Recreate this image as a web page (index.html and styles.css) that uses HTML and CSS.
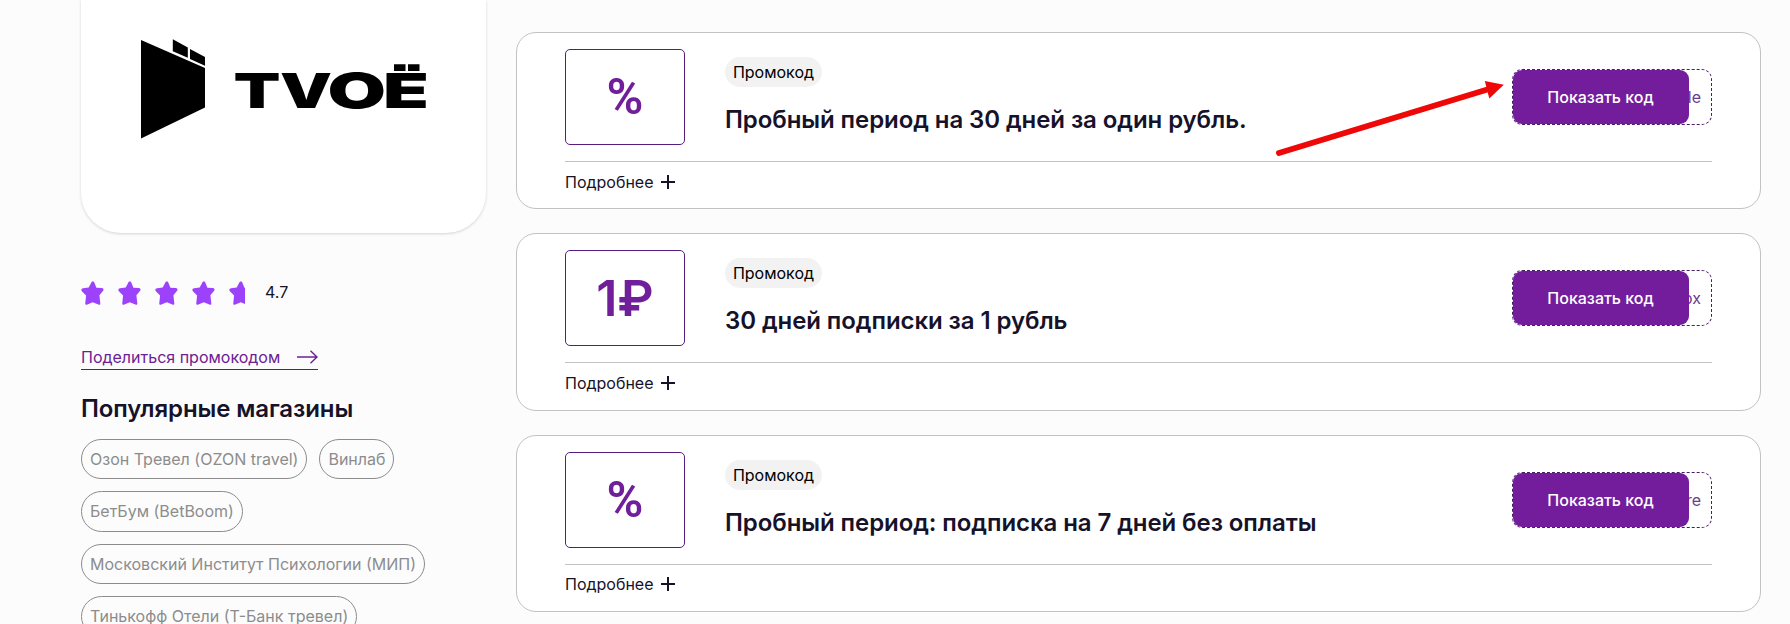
FILE: index.html
```
<!DOCTYPE html>
<html lang="ru">
<head>
<meta charset="utf-8">
<title>TVOЁ — промокоды</title>
<link rel="stylesheet" href="styles.css">
</head>
<body>
<svg class="sprite" width="0" height="0">
  <symbol id="star" viewBox="0 0 23 24"><path d="M11.800.5c.8 0 1.300.5 1.700 1.400l1.900 4.900 5.400.3c1.900.3 2.200 1.900.9 3.200l-3.300 3.900.9 8c.2 1.500-.7 2-1.900 1.300l-5.600-2.200-5.400 2.200c-1.300.6-2.300 0-2.100-1.400l.8-7.500-4-4.100c-1.300-1.400-.8-2.900 1-3.200l5.600-.7 2.400-4.700c.4-.9.9-1.400 1.700-1.400z" fill="#9b42fa"/></symbol>
  <symbol id="plus" viewBox="0 0 14 14"><path d="M7 0v14M0 7h14" stroke="#161229" stroke-width="2" fill="none"/></symbol>
</svg>
<div class="page">
  <aside class="side">
    <div class="brand">
      <svg class="brand-logo" width="290" height="104" viewBox="139 36 290 104">
        <clipPath id="letter-body"><rect x="0" y="72.800" width="60" height="40"/></clipPath>
        <path d="M141 40l64 28v39.500l-64 31zM172.800 39.300l15 8.200v10.200l-15-6.500zM190 49l15 8v8.700l-15-6.800z"/>
        <text class="brand-text" y="108" transform="translate(233.500 0)" textLength="47" lengthAdjust="spacingAndGlyphs">T</text>
        <text class="brand-text" y="108" transform="translate(280 0)" textLength="52" lengthAdjust="spacingAndGlyphs">V</text>
        <text class="brand-text" y="108" transform="translate(327.500 0)" textLength="58.500" lengthAdjust="spacingAndGlyphs">O</text>
        <g transform="translate(383 0)" clip-path="url(#letter-body)"><text class="brand-text" y="108" textLength="46" lengthAdjust="spacingAndGlyphs">Ё</text></g>
        <path d="M394 64.300h11.500v6.700h-11.500zM408 64.300h11.500v6.700h-11.500z"/>
      </svg>
    </div>
    <div class="rating">
      <svg class="star"><use href="#star"/></svg>
      <svg class="star"><use href="#star"/></svg>
      <svg class="star"><use href="#star"/></svg>
      <svg class="star"><use href="#star"/></svg>
      <span class="star-part"><svg class="star"><use href="#star"/></svg></span>
      <span class="score">4.7</span>
    </div>
    <a class="share"><span>Поделиться промокодом</span><svg width="21" height="14" viewBox="0 0 21 14"><path d="M0 7h20M13.500.8L20 7l-6.500 6.200" fill="none" stroke="#6b2193" stroke-width="1.400"/></svg></a>
    <h2 class="shops-title">Популярные магазины</h2>
    <div class="shops">
      <a class="shop">Озон Тревел (OZON travel)</a>
      <a class="shop">Винлаб</a>
      <a class="shop">БетБум (BetBoom)</a>
      <a class="shop">Московский Институт Психологии (МИП)</a>
      <a class="shop">Тинькофф Отели (Т-Банк тревел)</a>
    </div>
  </aside>
  <main class="offers">
    <article class="card">
      <div class="card-top">
        <div class="value value-percent">%</div>
        <div class="info"><span class="badge">Промокод</span><h3 class="title">Пробный период на 30 дней за один рубль.</h3></div>
        <div class="code"><span class="code-tail">le</span><span class="show">Показать код</span></div>
      </div>
      <div class="more">Подробнее<svg width="14" height="14"><use href="#plus"/></svg></div>
    </article>
    <article class="card">
      <div class="card-top">
        <div class="value">1₽</div>
        <div class="info"><span class="badge">Промокод</span><h3 class="title">30 дней подписки за 1 рубль</h3></div>
        <div class="code"><span class="code-tail">ox</span><span class="show">Показать код</span></div>
      </div>
      <div class="more">Подробнее<svg width="14" height="14"><use href="#plus"/></svg></div>
    </article>
    <article class="card">
      <div class="card-top">
        <div class="value value-percent">%</div>
        <div class="info"><span class="badge">Промокод</span><h3 class="title">Пробный период: подписка на 7 дней без оплаты</h3></div>
        <div class="code"><span class="code-tail">re</span><span class="show">Показать код</span></div>
      </div>
      <div class="more">Подробнее<svg width="14" height="14"><use href="#plus"/></svg></div>
    </article>
  </main>
</div>
<svg class="pointer" width="232" height="80" viewBox="1274 78 232 80"><path d="M1279 153L1489 89" stroke="#ef0808" stroke-width="6" stroke-linecap="round"/><path d="M1484.800 81l19 3.700-14.500 13.800z" fill="#ef0808"/></svg>
</body>
</html>
```
FILE: styles.css
```
* { box-sizing: border-box; }
body {
  margin: 0;
  height: 624px;
  overflow: hidden;
  background: #fcfcfc;
  color: #161229;
  font: 400 16px/20px Inter, "Liberation Sans", sans-serif;
}
.sprite { display: block; height: 0; }
.page { display: flex; align-items: flex-start; height: 624px; padding-left: 81px; overflow: hidden; }
.side { width: 405px; flex: none; }
.brand {
  height: 233px;
  padding: 36px 0 0 58px;
  background: #fff;
  border-radius: 0 0 40px 40px;
  box-shadow: 0 1px 3px rgba(0, 0, 0, .16);
}
.brand-logo { display: block; }
.brand-text { font: 900 48px Inter, sans-serif; }
.rating { display: flex; align-items: center; gap: 14px; height: 24px; margin-top: 48px; }
.star { display: block; flex: none; width: 23px; height: 24px; }
.star-part { width: 16px; height: 24px; overflow: hidden; }
.score { margin-left: 6px; padding-bottom: 2px; }
.share {
  display: flex;
  align-items: center;
  justify-content: space-between;
  width: 237px;
  height: 24px;
  margin-top: 41px;
  padding-bottom: 1px;
  border-bottom: 1px solid #571d7c;
  color: #6b2193;
  white-space: nowrap;
}
.shops-title { margin: 24px 0 15px; font-size: 24px; line-height: 30px; font-weight: 600; letter-spacing: -.1px; }
.shops { display: flex; flex-wrap: wrap; gap: 12px; }
.shop {
  height: 40.4px;
  padding: 0 8px;
  border: 1px solid #8c8c8c;
  border-radius: 21px;
  color: #8c8c8c;
  line-height: 39px;
  white-space: nowrap;
}
.offers { display: flex; flex-direction: column; gap: 24px; width: 1245px; margin: 32px 0 0 30px; flex: none; }
.card {
  height: 177.4px;
  padding: 16px 48px 0;
  background: #fff;
  border: 1px solid #c2c2c2;
  border-radius: 20px;
}
.card-top { display: flex; height: 113px; border-bottom: 1px solid #c2c2c2; }
.value {
  display: flex;
  align-items: center;
  justify-content: center;
  width: 120px;
  height: 96px;
  border: 1px solid #571d7c;
  border-radius: 5px;
  color: #711e9b;
  font-size: 50px;
  font-weight: 600;
}
.value-percent { font-family: Roboto, sans-serif; font-weight: 600; }
.info { flex: 1; padding: 8px 0 0 40px; }
.badge {
  display: block;
  width: 97px;
  height: 30px;
  border-radius: 15px;
  background: #f2f2f2;
  color: #000;
  line-height: 30px;
  text-align: center;
}
.title { margin: 18px 0 0; font-size: 24px; line-height: 30px; font-weight: 600; letter-spacing: -.08px; }
.code {
  position: relative;
  display: flex;
  align-items: center;
  justify-content: flex-end;
  width: 200px;
  height: 56px;
  margin-top: 20px;
  padding-right: 10px;
  border: 1px dashed #4c1a6c;
  border-radius: 10px;
  color: #6d3a8c;
}
.show {
  position: absolute;
  left: 0;
  top: 0;
  width: 176px;
  height: 54px;
  padding-right: 1px;
  border-radius: 9px;
  background: #731d9d;
  color: #fff;
  font-weight: 500;
  line-height: 54px;
  text-align: center;
}
.more { display: flex; align-items: center; gap: 7px; height: 39px; }
.pointer { position: absolute; left: 1274px; top: 78px; }
```
